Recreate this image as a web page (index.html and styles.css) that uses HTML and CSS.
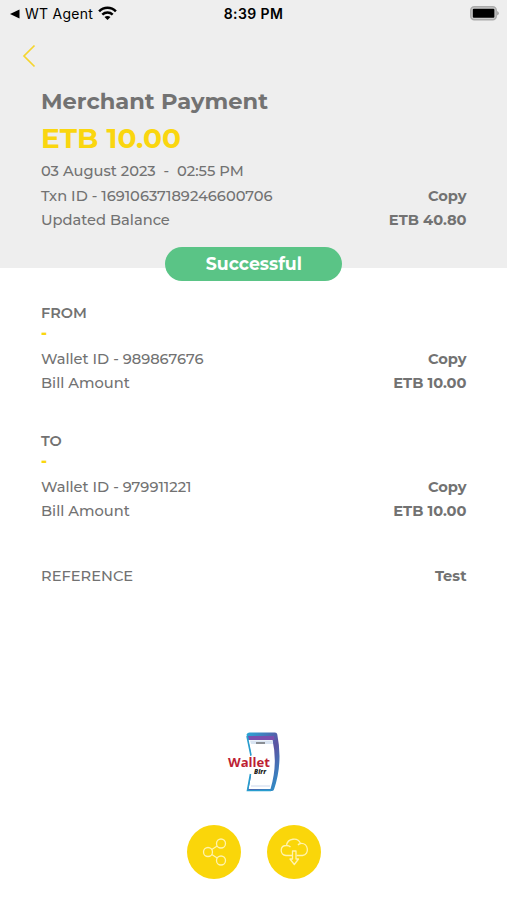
FILE: index.html
```html
<!DOCTYPE html>
<html lang="en">
<head>
<meta charset="utf-8">
<title>Merchant Payment</title>
<link rel="stylesheet" href="styles.css">
</head>
<body>
<header class="summary">
  <div class="status">
    <div class="status-left">
      <svg width="10" height="10" viewBox="0 0 10 10"><path d="M0 5 9.5 .6v8.8z"/></svg>
      <span class="app">WT Agent</span>
      <svg class="wifi" width="19" height="15" viewBox="0 0 19 15" fill="none" stroke="#000" stroke-width="2.5"><path d="M1.1 5.3C5.8.5 13.2.5 17.9 5.3"/><path d="M4.3 8.7C7.3 5.9 11.7 5.9 14.7 8.7"/><path d="M9.5 14 6.5 11C8.2 9.5 10.8 9.5 12.5 11z" fill="#000" stroke="none"/></svg>
    </div>
    <span class="time">8:39 PM</span>
    <svg class="battery" width="31" height="15" viewBox="0 0 31 15"><rect x="2.8" y=".8" width="25.4" height="13" rx="3.5" fill="#ccc" stroke="#aaa" stroke-width="1.5"/><rect x="4.8" y="2.8" width="21.6" height="9" rx="1"/><path d="M29 5q2 1 2 2.300t-2 2.300z" fill="#aaa"/></svg>
  </div>
  <svg class="back" width="14" height="24" viewBox="0 0 14 24"><path d="M12.5 1.5 2 12 12.5 22.5" fill="none" stroke="#f5d52e" stroke-width="1.7"/></svg>
  <h1 class="title">Merchant Payment</h1>
  <div class="amount">ETB 10.00</div>
  <div class="row"><span>03 August 2023&nbsp; -&nbsp; 02:55 PM</span></div>
  <div class="row"><span>Txn ID - 16910637189246600706</span><b>Copy</b></div>
  <div class="row"><span>Updated Balance</span><b>ETB 40.80</b></div>
  <div class="badge">Successful</div>
</header>
<main class="details">
  <section class="party">
    <h2 class="heading">FROM</h2>
    <div class="dash">-</div>
    <div class="row"><span>Wallet ID - 989867676</span><b>Copy</b></div>
    <div class="row"><span>Bill Amount</span><b>ETB 10.00</b></div>
  </section>
  <section class="party">
    <h2 class="heading">TO</h2>
    <div class="dash">-</div>
    <div class="row"><span>Wallet ID - 979911221</span><b>Copy</b></div>
    <div class="row"><span>Bill Amount</span><b>ETB 10.00</b></div>
  </section>
  <div class="row reference"><span>REFERENCE</span><b>Test</b></div>
</main>
<footer class="footer">
  <svg class="logo" width="54" height="62" viewBox="0 0 54 62">
    <defs><linearGradient id="edge" x1="0" x2="1" y1="0" y2="1"><stop offset="0" stop-color="#28a9d8"/><stop offset=".55" stop-color="#5b53a2"/><stop offset="1" stop-color="#259bd0"/></linearGradient></defs>
    <path d="M19.500 2.5Q20.500.5 22.500.5H48Q50 .5 50.300 2.500Q56 31 47 57.500Q46.500 59 44.500 59H20Q28 31 19.500 2.5z" fill="url(#edge)"/>
    <path d="M21 8H45.500Q51 32 43.500 57H21.500Q28 31 21 8z" fill="#fff"/>
    <path d="M21 4H47L47.500 8H22z" fill="#7a4fae"/>
    <path d="M23 8.5H45.500L46 12H24z" fill="#d9e4f2"/>
    <path d="M29 11h9" stroke="#555" stroke-width="1.2"/>
    <path d="M24 54h19" stroke="#cbd8ec"/>
    <path d="M19 24H27.5V42H19z" fill="#fff"/>
    <path d="M20 4 24 23.5M23.5 42 20.500 58.500H44" fill="none" stroke="#289dce" stroke-width="1.6"/>
    <text class="logo-name" x="1" y="35" textLength="42" lengthAdjust="spacingAndGlyphs">Wallet</text>
    <text class="logo-sub" x="27" y="41.5" textLength="12" lengthAdjust="spacingAndGlyphs">Birr</text>
  </svg>
  <div class="actions">
    <button class="action" aria-label="Share"><svg width="54" height="54" viewBox="0 0 54 54"><circle cx="21" cy="27" r="4.5"/><circle cx="34" cy="18.5" r="4.5"/><circle cx="34" cy="35.5" r="4.5"/><path d="M24.8 24.5 30.2 21M24.8 29.5 30.2 33"/></svg></button>
    <button class="action" aria-label="Download"><svg width="54" height="54" viewBox="0 0 54 54"><path d="M25 30.5H19C12.5 30 12.5 20.5 19.5 20.5 20.5 13 31 12 33.5 18.5 41.5 17.5 43 29.5 35.5 30.5H29.5M19.5 20.5Q22 20.5 23.5 22M31 20Q32 18.7 33.5 18.5"/><path d="M25.5 26h3.5v8h2.5l-4.2 5.5-4.3-5.5h2.5z"/></svg></button>
  </div>
</footer>
</body>
</html>
```

FILE: styles.css
```css
* { box-sizing: border-box; }
body { margin: 0; height: 900px; background: #fff; color: #727272; font: 500 14.65px/24.5px Montserrat, Inter, sans-serif; white-space: nowrap; display: flex; flex-direction: column; }
svg { display: block; }
.summary { height: 268px; padding: 0 40.5px 0 41px; background: #eee; position: relative; flex: none; }
.status { height: 27px; margin: 0 -32.5px 0 -31px; display: grid; grid-template-columns: 1fr auto 1fr; align-items: center; color: #000; line-height: 27px; }
.status-left { display: flex; align-items: center; gap: 5px; }
.app { font-family: Inter, sans-serif; font-weight: 400; font-size: 14px; letter-spacing: .25px; }
.time { font-family: Inter, sans-serif; font-weight: 600; font-size: 14px; letter-spacing: .4px; margin-left: -2px; }
.battery { justify-self: end; }
.back { margin: 17px 0 0 -19px; }
.title { margin: 18px 0 0; font-size: 22.6px; line-height: 30px; font-weight: 700; }
.amount { margin-top: 3px; font-size: 28px; line-height: 38px; font-weight: 700; color: #fad60f; }
.row { height: 24.5px; display: flex; justify-content: space-between; }
.amount + .row { margin-top: 2px; }
b { font-weight: 700; }
.badge { position: absolute; left: 165.4px; top: 246.5px; width: 177px; height: 34px; border-radius: 17px; background: #5ac486; color: #fff; font-size: 17.3px; line-height: 34px; font-weight: 700; text-align: center; }
.details { padding: 33px 40.5px 0 41px; height: 464px; flex: none; }
.party { height: 128.3px; }
.heading { margin: 0; font-size: 14.5px; line-height: 24px; font-weight: 600; }
.dash { height: 21.5px; line-height: 16px; color: #fad60f; font-weight: 800; font-size: 15.5px; }
.reference { margin-top: 6px; }
.footer { display: flex; flex-direction: column; align-items: center; }
.logo { margin-left: 1px; }
.logo-name { font: 700 13px "Open Sans", sans-serif; fill: #bd1f35; }
.logo-sub { font: italic 800 6px "Open Sans", sans-serif; fill: #222; }
.actions { display: flex; gap: 26px; margin-top: 31px; }
.action { width: 54px; height: 54px; padding: 0; border: 0; border-radius: 50%; background: #fad60a; }
.action svg { fill: none; stroke: #fff3ae; stroke-width: 1.3; stroke-linejoin: round; }
```
